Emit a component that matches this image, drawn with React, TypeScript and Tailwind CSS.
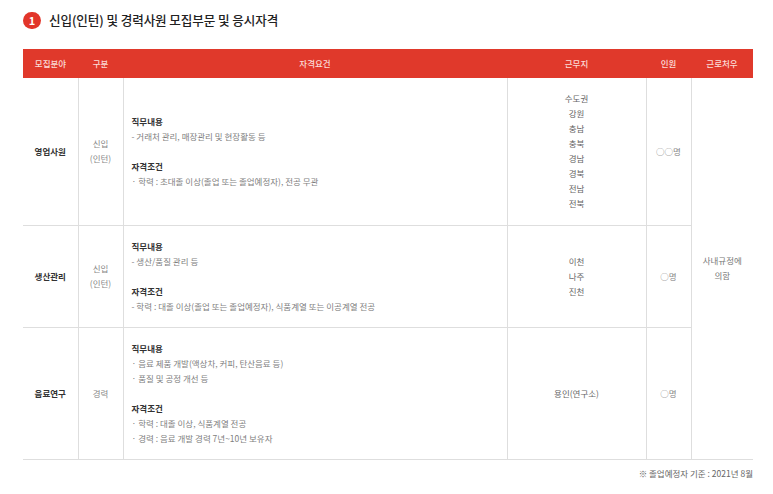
import React from 'react';

interface Section {
  title: string;
  lines: string[];
}

interface Row {
  field: string;
  kind: string[];
  sections: Section[];
  places: string[];
  count: string;
  height: string;
}

const rows: Row[] = [
  {
    field: '영업사원',
    kind: ['신입', '(인턴)'],
    sections: [
      { title: '직무내용', lines: ['- 거래처 관리, 매장관리 및 현장활동 등'] },
      { title: '자격조건', lines: ['· 학력 : 초대졸 이상(졸업 또는 졸업예정자), 전공 무관'] },
    ],
    places: ['수도권', '강원', '충남', '충북', '경남', '경북', '전남', '전북'],
    count: '○○명',
    height: 'h-[147px]',
  },
  {
    field: '생산관리',
    kind: ['신입', '(인턴)'],
    sections: [
      { title: '직무내용', lines: ['- 생산/품질 관리 등'] },
      { title: '자격조건', lines: ['- 학력 : 대졸 이상(졸업 또는 졸업예정자), 식품계열 또는 이공계열 전공'] },
    ],
    places: ['이천', '나주', '진천'],
    count: '○명',
    height: 'h-[102px]',
  },
  {
    field: '음료연구',
    kind: ['경력'],
    sections: [
      { title: '직무내용', lines: ['· 음료 제품 개발(액상차, 커피, 탄산음료 등)', '· 품질 및 공정 개선 등'] },
      { title: '자격조건', lines: ['· 학력 : 대졸 이상, 식품계열 전공', '· 경력 : 음료 개발 경력 7년~10년 보유자'] },
    ],
    places: ['용인(연구소)'],
    count: '○명',
    height: 'h-[132px]',
  },
];

const headers = ['모집분야', '구분', '자격요건', '근무지', '인원', '근로처우'];
const widths = ['w-[55px]', 'w-[45px]', 'w-[384px]', 'w-[139px]', 'w-[45px]', 'w-[62px]'];

export default function App() {
  return (
    <div
      className="w-[773px] h-[494px] bg-white px-[23px] pt-[11px] text-[#666]"
      style={{ fontFamily: '"Noto Sans CJK KR", "Noto Sans", sans-serif' }}
    >
      {/* Title */}
      <div className="flex items-center gap-[8px] h-[18px]">
        <span className="flex items-center justify-center w-[18px] h-[17px] rounded-full bg-[#e2352a] text-white text-[11px] font-bold leading-none">
          1
        </span>
        <h2 className="text-[12.6px] font-medium text-[#222] leading-none tracking-[-0.1px]">
          신입(인턴) 및 경력사원 모집부문 및 응시자격
        </h2>
      </div>

      <table className="mt-[20px] w-[730px] border-collapse table-fixed text-[8.5px] leading-[15px]">
        <colgroup>
          {widths.map((w, i) => (
            <col key={i} className={w} />
          ))}
        </colgroup>
        <thead>
          <tr className="h-[29px] bg-[#e0392b]">
            {headers.map(h => (
              <th key={h} className="font-medium text-[#fbdcd8] text-center align-middle p-0">
                {h}
              </th>
            ))}
          </tr>
        </thead>
        <tbody>
          {rows.map((row, idx) => (
            <tr key={row.field} className={`${row.height} border-b border-[#dedede]`}>
              <td className="text-center align-middle font-bold text-[#333] p-0">{row.field}</td>
              <td className="text-center align-middle text-[#888] border-l border-[#dedede] p-0">
                {row.kind.map(k => (
                  <div key={k}>{k}</div>
                ))}
              </td>
              <td className="align-middle border-l border-[#dedede] pl-[8px] pr-0">
                {row.sections.map((s, si) => (
                  <div key={s.title} className={si > 0 ? 'mt-[15px]' : ''}>
                    <div className="font-bold text-[#333]">{s.title}</div>
                    {s.lines.map(l => (
                      <div key={l} className="text-[#808080]">
                        {l}
                      </div>
                    ))}
                  </div>
                ))}
              </td>
              <td className="text-center align-middle border-l border-[#dedede] text-[#666] p-0">
                {row.places.map(p => (
                  <div key={p}>{p}</div>
                ))}
              </td>
              <td className="text-center align-middle border-l border-[#dedede] text-[#888] p-0">
                {row.count}
              </td>
              {idx === 0 && (
                <td
                  rowSpan={3}
                  className="text-center align-middle border-l border-[#dedede] text-[#777] p-0"
                >
                  <div>사내규정에</div>
                  <div>의함</div>
                </td>
              )}
            </tr>
          ))}
        </tbody>
      </table>

      <p className="mt-[7px] -mr-[3px] text-right text-[8.5px] text-[#666] leading-[12px]">
        ※ 졸업예정자 기준 : 2021년 8월
      </p>
    </div>
  );
}
